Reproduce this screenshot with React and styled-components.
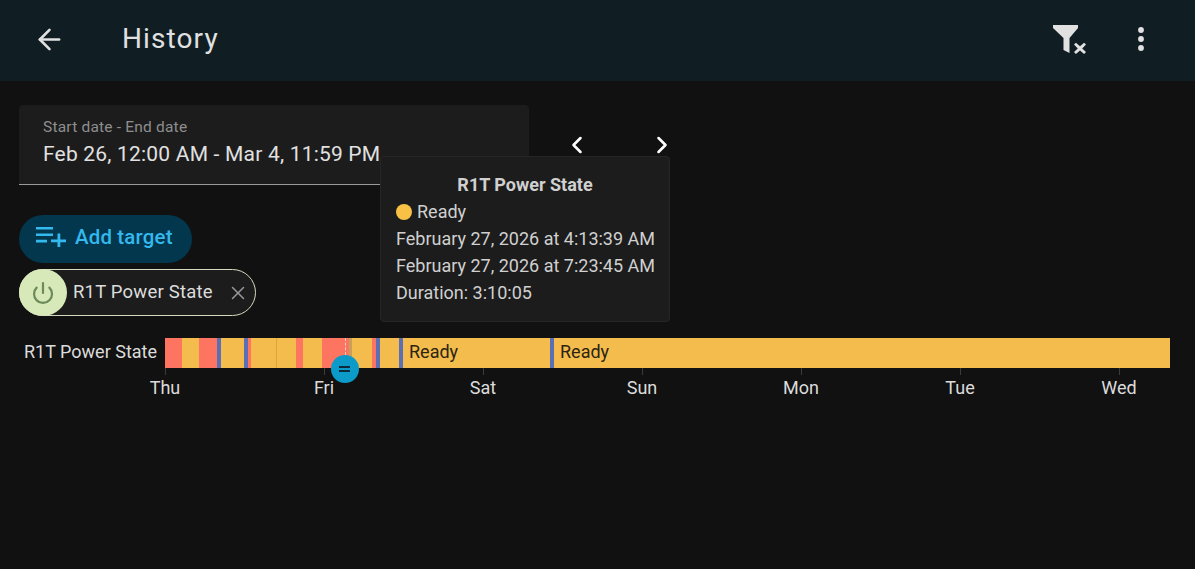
import styled, { createGlobalStyle } from "styled-components";
import { ArrowLeft, ChevronLeft, ChevronRight, Power, X } from "lucide-react";

const GlobalStyle = createGlobalStyle`
    html, body {
        margin: 0;
        background: #111111;
        font-family: Roboto, "Liberation Sans", sans-serif;
    }
`;

const Page = styled.div`
    position: relative;
    width: 1195px;
    height: 569px;
    overflow: hidden;
    background: #111111;
    color: #e1e1e1;
`;

const Header = styled.header`
    display: flex;
    align-items: center;
    height: 81px;
    padding: 0 51px 3px 33px;
    box-sizing: border-box;
    background: #101e24;
`;

const Title = styled.h1`
    margin: 0 0 2px 56px;
    flex: 1;
    font-size: 28px;
    font-weight: 400;
    letter-spacing: 1.1px;
    color: #e1e1e1;
`;

const HeaderIcon = styled.svg`
    display: block;
    color: #e1e1e1;
`;

const Actions = styled.div`
    display: flex;
    align-items: center;
    gap: 51px;
`;

const Content = styled.main`
    padding: 24px 0 0 19px;
`;

const DateRow = styled.div`
    display: flex;
    align-items: flex-start;
`;

const DateField = styled.div`
    width: 510px;
    height: 80px;
    padding: 14px 0 0 24px;
    box-sizing: border-box;
    background: #1c1c1c;
    border-radius: 4px 4px 0 0;
    border-bottom: 1px solid #9a9a9a;
`;

const DateLabel = styled.div`
    font-size: 15.5px;
    line-height: 16px;
    letter-spacing: 0.2px;
    color: #8e8e8e;
`;

const DateValue = styled.div`
    margin-top: 6px;
    font-size: 21px;
    line-height: 26px;
    letter-spacing: 0.2px;
    white-space: nowrap;
    color: #e1e1e1;
`;

const Arrows = styled.div`
    display: flex;
    gap: 57px;
    margin: 26px 0 0 34px;
    color: #ffffff;
`;

const AddButton = styled.button`
    display: flex;
    align-items: center;
    gap: 9px;
    width: 173px;
    height: 48px;
    margin-top: 30px;
    padding: 0 0 4px 17px;
    border: 0;
    border-radius: 24px;
    box-sizing: border-box;
    background: #02374e;
    color: #34b9ef;
    font-family: inherit;
    font-size: 20.4px;
    font-weight: 500;
    letter-spacing: 0.2px;
`;

const Chip = styled.div`
    display: flex;
    align-items: center;
    width: 237px;
    height: 47px;
    margin-top: 6px;
    box-sizing: border-box;
    border: 1px solid #d5d9bd;
    border-radius: 24px;
    background: #1c1c1c;
`;

const ChipIcon = styled.div`
    display: flex;
    align-items: center;
    justify-content: center;
    flex: none;
    width: 48px;
    height: 47px;
    margin: 0 0 0 -1px;
    border-radius: 50%;
    background: #d7e8b9;
    color: #6c8a5a;
`;

const ChipLabel = styled.span`
    flex: 1;
    margin: 0 0 1px 6px;
    font-size: 18.5px;
    letter-spacing: 0.2px;
    white-space: nowrap;
    color: #dcdcdc;
`;

const ChipClose = styled.span`
    display: flex;
    margin-right: 6px;
    color: #999999;
`;

const Timeline = styled.section`
    display: flex;
    align-items: center;
    height: 30px;
    margin: 22px 0 0 5px;
`;

const RowLabel = styled.div`
    width: 141px;
    margin-bottom: 3px;
    font-size: 18px;
    white-space: nowrap;
    color: #dcdcdc;
`;

const Bar = styled.div`
    display: flex;
    width: 1005px;
    height: 30px;
`;

const Segment = styled.div`
    flex: none;
    display: flex;
    align-items: center;
    width: ${(p) => p.$w}px;
    padding: ${(p) => (p.$label ? "0 0 3px 6px" : "0")};
    box-sizing: border-box;
    background: ${(p) => p.$c};
    border-right: ${(p) => (p.$edge ? "1px solid #d9a63f" : "0")};
    font-size: 18px;
    color: #2b2412;
`;

const Axis = styled.div`
    display: grid;
    grid-template-columns: repeat(7, 159px);
    margin: 9px 0 0 66.5px;
`;

const Tick = styled.div`
    position: relative;
    text-align: center;
    font-size: 18px;
    line-height: 22px;
    color: #dcdcdc;

    &::before {
        content: "";
        position: absolute;
        top: -9px;
        left: 79px;
        width: 1px;
        height: 7px;
        background: #3c3c3c;
    }
`;

const Marker = styled.div`
    position: absolute;
    left: 331px;
    top: 355px;
    width: 28px;
    height: 28px;
    border-radius: 50%;
    background: #0c9ac8;

    &::before {
        content: "";
        position: absolute;
        left: 8px;
        top: 11px;
        width: 11px;
        height: 2px;
        background: #0c2a38;
        box-shadow: 0 4px 0 #0c2a38;
    }
`;

const DashLine = styled.div`
    position: absolute;
    left: 345px;
    top: 338px;
    width: 0;
    height: 17px;
    border-left: 1px dashed #f5c9c0;
`;

const Tooltip = styled.div`
    position: absolute;
    left: 380px;
    top: 156px;
    width: 290px;
    height: 166px;
    padding: 17px 15px 0;
    box-sizing: border-box;
    background: #1c1c1c;
    border: 1px solid #262626;
    border-radius: 4px;
    font-size: 18px;
    line-height: 27px;
    color: #d0d0d0;
`;

const TooltipTitle = styled.div`
    margin-bottom: 2px;
    line-height: 22px;
    text-align: center;
    font-weight: 700;
    font-size: 18px;
`;

const TooltipLine = styled.div`
    display: flex;
    align-items: center;
    gap: 5px;
    white-space: nowrap;
`;

const Dot = styled.span`
    width: 16px;
    height: 16px;
    border-radius: 50%;
    background: ${(p) => p.$c};
`;

const RED = "#fd7560";
const YEL = "#f4bc4c";
const BLU = "#5a6fb4";

const segments = [
    [17, RED], [17, YEL], [18, RED], [4, BLU], [23, YEL], [4, BLU], [3, RED],
    [26, YEL, true], [19, YEL], [7, RED], [19, YEL], [27, RED], [3, "#c8a05a"],
    [20, YEL], [4, RED], [4, BLU], [19, YEL], [4, BLU],
    [147, YEL, false, "Ready"], [4, BLU], [616, YEL, false, "Ready"],
];

const days = ["Thu", "Fri", "Sat", "Sun", "Mon", "Tue", "Wed"];

const App = () => {
    return (
        <Page>
            <GlobalStyle />
            <Header>
                <ArrowLeft size={33} strokeWidth={1.9} color="#e1e1e1" />
                <Title>History</Title>
                <Actions>
                    <HeaderIcon width="34" height="29" viewBox="0 0 34 29" fill="currentColor">
                        <path d="M0 0h25v3l-8.5 10v15l-6-3V13L0 3z" />
                        <path d="M21 19.6l1.9-1.9 4.1 3.5 4.1-3.5 1.9 1.9-3.8 3.9 3.8 3.6-1.9 1.9-4.1-3.6-4.1 3.6-1.9-1.9 3.8-3.6z" />
                    </HeaderIcon>
                    <HeaderIcon width="6" height="24" viewBox="0 0 6 24" fill="currentColor">
                        <circle cx="3" cy="3" r="2.9" />
                        <circle cx="3" cy="12" r="2.9" />
                        <circle cx="3" cy="21" r="2.9" />
                    </HeaderIcon>
                </Actions>
            </Header>
            <Content>
                <DateRow>
                    <DateField>
                        <DateLabel>Start date - End date</DateLabel>
                        <DateValue>Feb 26, 12:00 AM - Mar 4, 11:59 PM</DateValue>
                    </DateField>
                    <Arrows>
                        <ChevronLeft size={28} strokeWidth={2.2} />
                        <ChevronRight size={28} strokeWidth={2.2} />
                    </Arrows>
                </DateRow>
                <AddButton>
                    <svg width="30" height="20" viewBox="0 0 30 20" fill="currentColor">
                        <path d="M0 0h17v2.6H0zM0 6.4h17V9H0zM0 12.8h11v2.6H0z" />
                        <path d="M21.5 6.5h2.8v6h5.7v2.8h-5.7V20h-2.8v-4.7H15v-2.8h6.5z" />
                    </svg>
                    Add target
                </AddButton>
                <Chip>
                    <ChipIcon><Power size={24} strokeWidth={2.2} /></ChipIcon>
                    <ChipLabel>R1T Power State</ChipLabel>
                    <ChipClose><X size={22} strokeWidth={1.6} /></ChipClose>
                </Chip>
                <Timeline>
                    <RowLabel>R1T Power State</RowLabel>
                    <Bar>
                        {segments.map(([w, c, edge, label], i) => (
                            <Segment key={i} $w={w} $c={c} $edge={edge} $label={label}>{label}</Segment>
                        ))}
                    </Bar>
                </Timeline>
                <Axis>
                    {days.map((d) => <Tick key={d}>{d}</Tick>)}
                </Axis>
            </Content>
            <DashLine />
            <Marker />
            <Tooltip>
                <TooltipTitle>R1T Power State</TooltipTitle>
                <TooltipLine><Dot $c="#f8c146" />Ready</TooltipLine>
                <TooltipLine>February 27, 2026 at 4:13:39 AM</TooltipLine>
                <TooltipLine>February 27, 2026 at 7:23:45 AM</TooltipLine>
                <TooltipLine>Duration: 3:10:05</TooltipLine>
            </Tooltip>
        </Page>
    );
};

export default App;
